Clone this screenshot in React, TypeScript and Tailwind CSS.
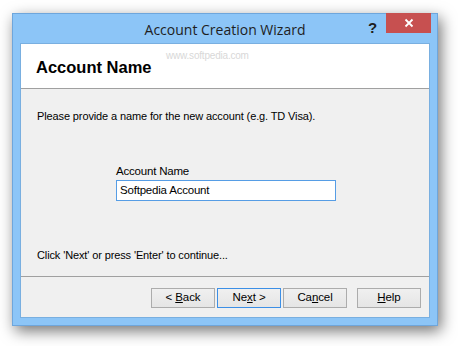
import React from "react";

const sans = { fontFamily: '"Liberation Sans", Arial, sans-serif' };

function Btn({ children, primary }: { children: React.ReactNode; primary?: boolean }) {
  return (
    <div
      className={
        "w-[64px] h-[20px] flex items-center justify-center text-[11.5px] tracking-[-0.1px] text-black bg-gradient-to-b from-[#f0f0f0] to-[#e5e5e5] border " +
        (primary ? "border-[#3c8fe6]" : "border-[#acacac]")
      }
    >
      <span className="whitespace-pre">{children}</span>
    </div>
  );
}

export default function App() {
  return (
    <div className="w-[458px] h-[346px] bg-white pl-[12px] pt-[13px] overflow-hidden" style={sans}>
      <div className="relative w-[426px] h-[313px] flex flex-col bg-[#8cc5f7] border border-[#6ea6dc] shadow-[3px_5px_14px_rgba(0,0,0,0.55)]">
        {/* title bar */}
        <div className="relative h-[29px] flex items-center justify-center">
          <span
            className="text-[14px] text-[#1e1e1e] mt-[1px]"
            style={{ fontFamily: '"Open Sans", "Noto Sans", sans-serif' }}
          >
            Account Creation Wizard
          </span>
          <span className="absolute left-[355px] top-[3px] text-[15px] font-bold text-[#1e1e1e]" style={sans}>
            ?
          </span>
          <div className="absolute left-[373px] top-[-1px] w-[45px] h-[20px] bg-[#c75050] flex items-center justify-center">
            <svg width="10" height="10" viewBox="0 0 10 10">
              <path d="M1.5 1.5 L8.5 8.5 M8.5 1.5 L1.5 8.5" stroke="white" strokeWidth="1.8" />
            </svg>
          </div>
        </div>
        {/* client */}
        <div className="mx-[7px] flex-1 flex flex-col border border-[#79afe0] mb-[7px]">
          <div className="relative h-[45px] bg-white border-b border-[#a0a0a0] flex items-center pl-[15px]">
            <span className="text-[16.5px] font-bold text-black pt-[3px]">Account Name</span>
            <span className="absolute left-[145px] top-[4px] text-[10px] tracking-[-0.2px] text-[#d8d8d8]">
              www.softpedia.com
            </span>
          </div>
          <div className="flex-1 bg-[#f0f0f0] flex flex-col">
            <div className="pl-[16px] pt-[20px] text-[11px] tracking-[-0.12px] text-black leading-[14px]">
              Please provide a name for the new account (e.g. TD Visa).
            </div>
            <div className="pl-[95px] pt-[41px] flex flex-col">
              <span className="text-[11.5px] tracking-[-0.2px] text-black leading-[14px]">Account Name</span>
              <div className="mt-[2px] w-[220px] h-[21px] bg-white border border-[#569de5] flex items-center pl-[3px] text-[11.5px] tracking-[-0.2px] text-black">
                Softpedia Account
              </div>
            </div>
            <div className="pl-[16px] pt-[47px] text-[11px] tracking-[-0.12px] text-black leading-[14px]">
              Click 'Next' or press 'Enter' to continue...
            </div>
            <div className="mt-[14px] border-t border-[#a0a0a0] flex-1 flex items-start pt-[11px] pl-[130px]">
              <Btn>
                {"< "}<u>B</u>ack
              </Btn>
              <div className="w-[2px]" />
              <Btn primary>
                Ne<u>x</u>t {">"}
              </Btn>
              <div className="w-[2px]" />
              <Btn>
                Ca<u>n</u>cel
              </Btn>
              <div className="w-[10px]" />
              <Btn>
                <u>H</u>elp
              </Btn>
            </div>
          </div>
        </div>
      </div>
    </div>
  );
}
